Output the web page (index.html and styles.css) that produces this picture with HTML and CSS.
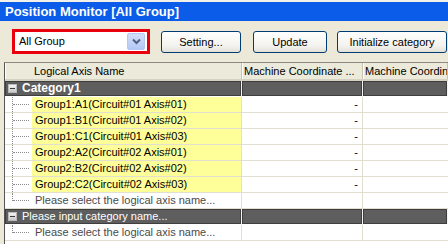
FILE: index.html
```html
<!DOCTYPE html>
<html>
<head>
<meta charset="utf-8">
<link rel="stylesheet" href="styles.css">
</head>
<body>
<div class="window">
  <div class="titlebar">Position Monitor [All Group]</div>
  <div class="toolbar">
    <div class="combo">
      <div class="combo-field">All Group</div>
      <div class="combo-btn">
        <svg width="9" height="7" viewBox="0 0 9 7"><path d="M1 1.5 L4.5 5 L8 1.5" fill="none" stroke="#4d6185" stroke-width="2"/></svg>
      </div>
    </div>
    <button class="btn btn-setting">Setting...</button>
    <button class="btn btn-update">Update</button>
    <button class="btn btn-init">Initialize category</button>
  </div>
  <div class="grid">
    <div class="row head">
      <div class="c1"><span class="hlabel">Logical Axis Name</span></div>
      <div class="c2">Machine Coordinate ...</div>
      <div class="c3">Machine Coordina</div>
    </div>
    <div class="row cat">
      <div class="c1"><span class="exp"></span><span class="catname bold">Category1</span></div>
      <div class="c2"></div>
      <div class="c3"></div>
    </div>
    <div class="row item">
      <div class="c1"><span class="tree"></span><span class="label yellow">Group1:A1(Circuit#01 Axis#01)</span></div>
      <div class="c2">-</div><div class="c3"></div>
    </div>
    <div class="row item">
      <div class="c1"><span class="tree"></span><span class="label yellow">Group1:B1(Circuit#01 Axis#02)</span></div>
      <div class="c2">-</div><div class="c3"></div>
    </div>
    <div class="row item">
      <div class="c1"><span class="tree"></span><span class="label yellow">Group1:C1(Circuit#01 Axis#03)</span></div>
      <div class="c2">-</div><div class="c3"></div>
    </div>
    <div class="row item">
      <div class="c1"><span class="tree"></span><span class="label yellow">Group2:A2(Circuit#02 Axis#01)</span></div>
      <div class="c2">-</div><div class="c3"></div>
    </div>
    <div class="row item">
      <div class="c1"><span class="tree"></span><span class="label yellow">Group2:B2(Circuit#02 Axis#02)</span></div>
      <div class="c2">-</div><div class="c3"></div>
    </div>
    <div class="row item">
      <div class="c1"><span class="tree"></span><span class="label yellow">Group2:C2(Circuit#02 Axis#03)</span></div>
      <div class="c2">-</div><div class="c3"></div>
    </div>
    <div class="row item">
      <div class="c1"><span class="tree last"></span><span class="label hint">Please select the logical axis name...</span></div>
      <div class="c2"></div><div class="c3"></div>
    </div>
    <div class="row cat">
      <div class="c1"><span class="exp"></span><span class="catname">Please input category name...</span></div>
      <div class="c2"></div>
      <div class="c3"></div>
    </div>
    <div class="row item">
      <div class="c1"><span class="tree last"></span><span class="label hint">Please select the logical axis name...</span></div>
      <div class="c2"></div><div class="c3"></div>
    </div>
  </div>
</div>
</body>
</html>
```
FILE: styles.css
```css
* { box-sizing: border-box; }
html, body { margin: 0; padding: 0; }
body {
  width: 448px;
  height: 244px;
  overflow: hidden;
  background: #ECE9D8;
  font-family: "Liberation Sans", Arial, sans-serif;
  font-size: 11px;
  color: #000;
}
.window {
  border-top: 2px solid #f2f1ea;
}
.titlebar {
  height: 19px;
  background: #0b5ce8;
  color: #fff;
  font-weight: bold;
  font-size: 13px;
  line-height: 19px;
  padding-left: 5px;
  white-space: nowrap;
}
.toolbar {
  display: flex;
  align-items: center;
  height: 41px;
  padding-left: 12px;
}
.combo {
  width: 138px;
  height: 25px;
  border: 3px solid #e8000c;
  background: #fff;
  display: flex;
  align-items: center;
  padding-right: 2px;
}
.combo-field {
  flex: 1;
  padding-left: 4px;
  font-size: 11px;
  line-height: 17px;
}
.combo-btn {
  width: 18px;
  height: 17px;
  background: linear-gradient(#d3def9, #b5c8f6);
  border: 1px solid #b4c6f2;
  border-radius: 2px;
  display: flex;
  align-items: center;
  justify-content: center;
}
.btn {
  height: 22px;
  border: 1px solid #003c74;
  border-radius: 3px;
  background: linear-gradient(#ffffff, #f3f2ee 70%, #e3e0d6);
  font-family: "Liberation Sans", Arial, sans-serif;
  font-size: 11px;
  color: #000;
  padding: 0;
  margin-top: 1px;
}
.btn-setting { width: 80px; margin-left: 11px; }
.btn-update { width: 74px; margin-left: 12px; }
.btn-init { width: 110px; margin-left: 10px; }

.grid {
  margin-left: 4px;
  border-left: 1px solid #555;
  border-top: 1px solid #8c8a80;
  background: #fff;
  height: 182px;
  overflow: hidden;
}
.row {
  display: flex;
  height: 16px;
  border-bottom: 1px solid #e2dfd0;
}
.row > div {
  white-space: nowrap;
  overflow: hidden;
  line-height: 15px;
}
.c1 { width: 237px; border-right: 1px solid #e2dfd0; display: flex; }
.c2 { width: 121px; border-right: 1px solid #e2dfd0; text-align: right; padding-right: 4px; }
.c3 { flex: 1; }

.row.head {
  height: 18px;
  background: #ebeadb;
  border-bottom: 2px solid #d6d2c2;
}
.row.head > div {
  line-height: 16px;
  color: #000;
  text-align: left;
  border-right: 1px solid #c7c5b2;
  box-shadow: inset 1px 0 0 #fff;
}
.row.head .c2, .row.head .c3 { padding-left: 2px; padding-right: 0; }
.hlabel { padding-left: 29px; }

.row.cat {
  background: #5e5e5e;
  border-bottom: 1px solid #fff;
}
.row.cat > div {
  border-right: 1px solid #f4f4f4;
  box-shadow: inset 0 0 0 1px #3e3e3e;
  color: #fff;
  align-items: center;
}
.exp {
  width: 9px;
  height: 9px;
  margin-left: 3px;
  border: 1px solid #b9b9b9;
  background: linear-gradient(#f4f4f4, #c9c9c9);
  position: relative;
}
.exp::after {
  content: "";
  position: absolute;
  left: 1px;
  right: 1px;
  top: 3px;
  height: 1px;
  background: #3a3a3a;
}
.catname { padding-left: 5px; font-size: 11px; }
.catname.bold { font-weight: bold; font-size: 12px; }

.tree {
  width: 27px;
  height: 15px;
  position: relative;
  flex: none;
}
.tree::before {
  content: "";
  position: absolute;
  left: 7px;
  top: 0;
  bottom: 0;
  border-left: 1px dotted #8a8a8a;
}
.tree.last::before { bottom: 7px; }
.tree::after {
  content: "";
  position: absolute;
  left: 8px;
  width: 16px;
  top: 7px;
  border-top: 1px dotted #8a8a8a;
}
.label {
  flex: 1;
  padding-left: 3px;
  height: 15px;
}
.label.yellow { background: #ffff99; }
.label.hint { color: #4a4a4a; }
```
